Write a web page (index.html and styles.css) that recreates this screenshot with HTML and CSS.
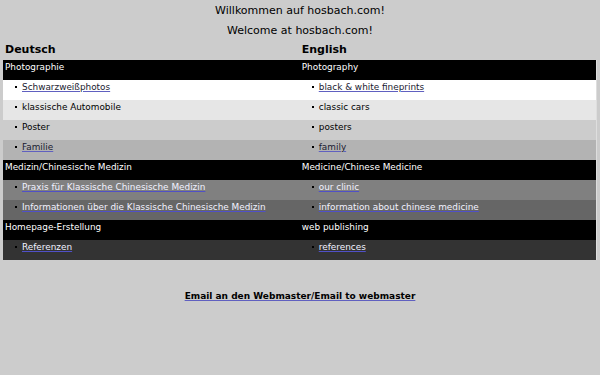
FILE: index.html
```html
<!DOCTYPE html>
<html lang="de">

<head>
    <meta charset="UTF-8" />
    <title>hosbach.com</title>
    <link rel="stylesheet" href="styles.css">
</head>

<body>

    <p class="welcome">Willkommen auf hosbach.com!</p>
    <p class="welcome">Welcome at hosbach.com!</p>

    <table class="sitemap">
        <tr class="lang-row">
            <th>Deutsch</th>
            <th>English</th>
        </tr>

        <tr class="section">
            <td>Photographie</td>
            <td>Photography</td>
        </tr>
        <tr class="shade-0">
            <td class="item"><a href="#">Schwarzweißphotos</a></td>
            <td class="item"><a href="#">black &amp; white fineprints</a></td>
        </tr>
        <tr class="shade-1">
            <td class="item">klassische Automobile</td>
            <td class="item">classic cars</td>
        </tr>
        <tr class="shade-2">
            <td class="item">Poster</td>
            <td class="item">posters</td>
        </tr>
        <tr class="shade-3">
            <td class="item"><a href="#">Familie</a></td>
            <td class="item"><a href="#">family</a></td>
        </tr>

        <tr class="section">
            <td>Medizin/Chinesische Medizin</td>
            <td>Medicine/Chinese Medicine</td>
        </tr>
        <tr class="shade-5 dark">
            <td class="item"><a href="#">Praxis für Klassische Chinesische Medizin</a></td>
            <td class="item"><a href="#">our clinic</a></td>
        </tr>
        <tr class="shade-6 dark">
            <td class="item"><a href="#">Informationen über die Klassische Chinesische Medizin</a></td>
            <td class="item"><a href="#">information about chinese medicine</a></td>
        </tr>

        <tr class="section">
            <td>Homepage-Erstellung</td>
            <td>web publishing</td>
        </tr>
        <tr class="shade-8 dark">
            <td class="item"><a href="#">Referenzen</a></td>
            <td class="item"><a href="#">references</a></td>
        </tr>
    </table>

    <p class="contact">
        <a href="#">Email an den Webmaster/Email to webmaster</a>
    </p>

</body>

</html>
```

FILE: styles.css
```css
body {
    margin: 0;
    padding: 1px 3px 0;
    background-color: #cccccc;
    color: #000;
    font-family: "DejaVu Sans", Verdana, sans-serif;
    font-size: 11px;
}

.welcome {
    margin: 0;
    text-align: center;
    line-height: 19.5px;
}

.sitemap {
    width: 100%;
    table-layout: fixed;
    border-collapse: collapse;
    font-size: 8.9px;
}

.sitemap th,
.sitemap td {
    height: 20px;
    padding: 0 2px;
    text-align: left;
    vertical-align: top;
    line-height: 14px;
}

.lang-row th {
    height: 19px;
    font-size: 11px;
    font-weight: bold;
    vertical-align: middle;
    line-height: 20px;
}

.section td {
    background-color: #000;
    color: #fff;
}

.shade-0 td { background-color: #ffffff; }
.shade-1 td { background-color: #e6e6e6; }
.shade-2 td { background-color: #cccccc; }
.shade-3 td { background-color: #b3b3b3; }
.shade-5 td { background-color: #808080; }
.shade-6 td { background-color: #666666; }
.shade-8 td { background-color: #333333; }

.sitemap tr:not(.lang-row) td:last-child {
    border-right: 1px solid #dedede;
}

.item::before {
    content: "";
    display: inline-block;
    width: 2px;
    height: 2px;
    margin: 0 5px 2px 10px;
    background-color: #000;
    vertical-align: middle;
}

.item a {
    color: #1a1a30;
    text-decoration-color: #6060c0;
}

.dark .item {
    color: #f0f0f0;
}

.dark .item a {
    color: #f2f2ff;
    text-decoration-color: #5050c8;
}

.contact {
    margin: 31px 0 0;
    text-align: center;
    font-size: 9px;
    line-height: 11px;
}

.contact a {
    color: #000;
    font-weight: bold;
    text-decoration-color: #6060c0;
}
```
